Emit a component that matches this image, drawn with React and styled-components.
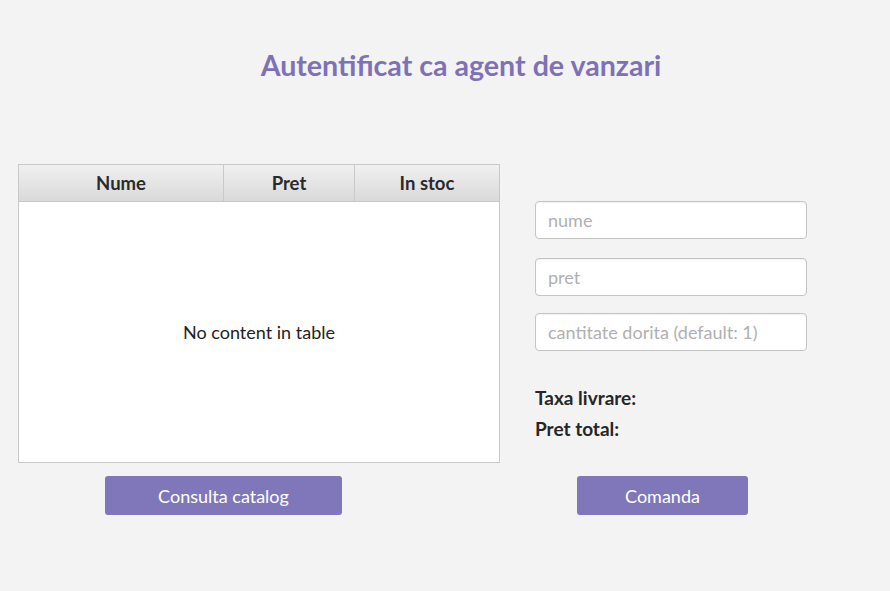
import React from 'react';
import styled, { createGlobalStyle } from 'styled-components';

const GlobalStyle = createGlobalStyle`
  html, body {
    margin: 0;
    padding: 0;
    background: #f3f3f3;
  }
  * {
    box-sizing: border-box;
  }
`;

const Page = styled.div`
  width: 890px;
  height: 591px;
  background: #f3f3f3;
  font-family: 'Lato', 'Open Sans', sans-serif;
  color: #333;
  padding: 46px 0 0 18px;
`;

const Title = styled.h1`
  margin: 0 0 0 242px;
  width: 402px;
  text-align: center;
  font-size: 28.6px;
  font-weight: 700;
  color: #7e71b6;
  line-height: 38px;
  white-space: nowrap;
`;

const Main = styled.div`
  display: flex;
  margin-top: 80px;
  gap: 35px;
`;

const LeftColumn = styled.div`
  display: flex;
  flex-direction: column;
  width: 482px;
`;

const RightColumn = styled.div`
  display: flex;
  flex-direction: column;
  width: 272px;
  padding-top: 37px;
`;

const Table = styled.div`
  height: 299px;
  border: 1px solid #c8c8c8;
  background: #fff;
  display: flex;
  flex-direction: column;
`;

const HeaderRow = styled.div`
  display: grid;
  grid-template-columns: 205px 131px 1fr;
  height: 37px;
  background: linear-gradient(#f0f0f0, #d9d9d9);
  border-bottom: 1px solid #c8c8c8;
`;

const HeaderCell = styled.div`
  display: flex;
  align-items: center;
  justify-content: center;
  font-size: 18.5px;
  font-weight: 700;
  color: #2a2a2a;
  border-right: ${(p) => (p.$last ? 'none' : '1px solid #c9c9c9')};
`;

const Empty = styled.div`
  flex: 1;
  display: flex;
  align-items: center;
  justify-content: center;
  font-size: 18px;
  color: #222;
`;

const Button = styled.button`
  height: 39px;
  width: ${(p) => p.$width}px;
  margin-left: ${(p) => p.$offset}px;
  background: #8077ba;
  border: none;
  border-radius: 3px;
  color: #fff;
  font-family: inherit;
  font-size: 18px;
  cursor: pointer;
`;

const LeftButton = styled(Button)`
  margin-top: 13px;
`;

const Input = styled.input`
  height: 38px;
  width: 272px;
  border: 1px solid #c4c4c4;
  border-radius: 4px;
  background: #fff;
  padding: 0 12px;
  font-family: inherit;
  font-size: 18px;
  color: #333;
  margin-bottom: ${(p) => p.$gap}px;
  box-shadow: inset 0 1px 2px rgba(0, 0, 0, 0.06);
  outline: none;
  &::placeholder {
    color: #b0b0b0;
  }
`;

const Summary = styled.div`
  display: flex;
  flex-direction: column;
  gap: 8px;
  margin-top: 35px;
`;

const Label = styled.div`
  font-size: 19px;
  font-weight: 700;
  color: #262626;
  line-height: 23px;
`;

const RightButton = styled(Button)`
  margin-top: 36px;
`;

export default function App() {
  return (
    <Page>
      <GlobalStyle />
      <Title>Autentificat ca agent de vanzari</Title>
      <Main>
        <LeftColumn>
          <Table>
            <HeaderRow>
              <HeaderCell>Nume</HeaderCell>
              <HeaderCell>Pret</HeaderCell>
              <HeaderCell $last>In stoc</HeaderCell>
            </HeaderRow>
            <Empty>No content in table</Empty>
          </Table>
          <LeftButton $width={237} $offset={87}>Consulta catalog</LeftButton>
        </LeftColumn>
        <RightColumn>
          <Input placeholder="nume" $gap={19} />
          <Input placeholder="pret" $gap={17} />
          <Input placeholder="cantitate dorita (default: 1)" $gap={0} />
          <Summary>
            <Label>Taxa livrare:</Label>
            <Label>Pret total:</Label>
          </Summary>
          <RightButton $width={171} $offset={42}>Comanda</RightButton>
        </RightColumn>
      </Main>
    </Page>
  );
}
